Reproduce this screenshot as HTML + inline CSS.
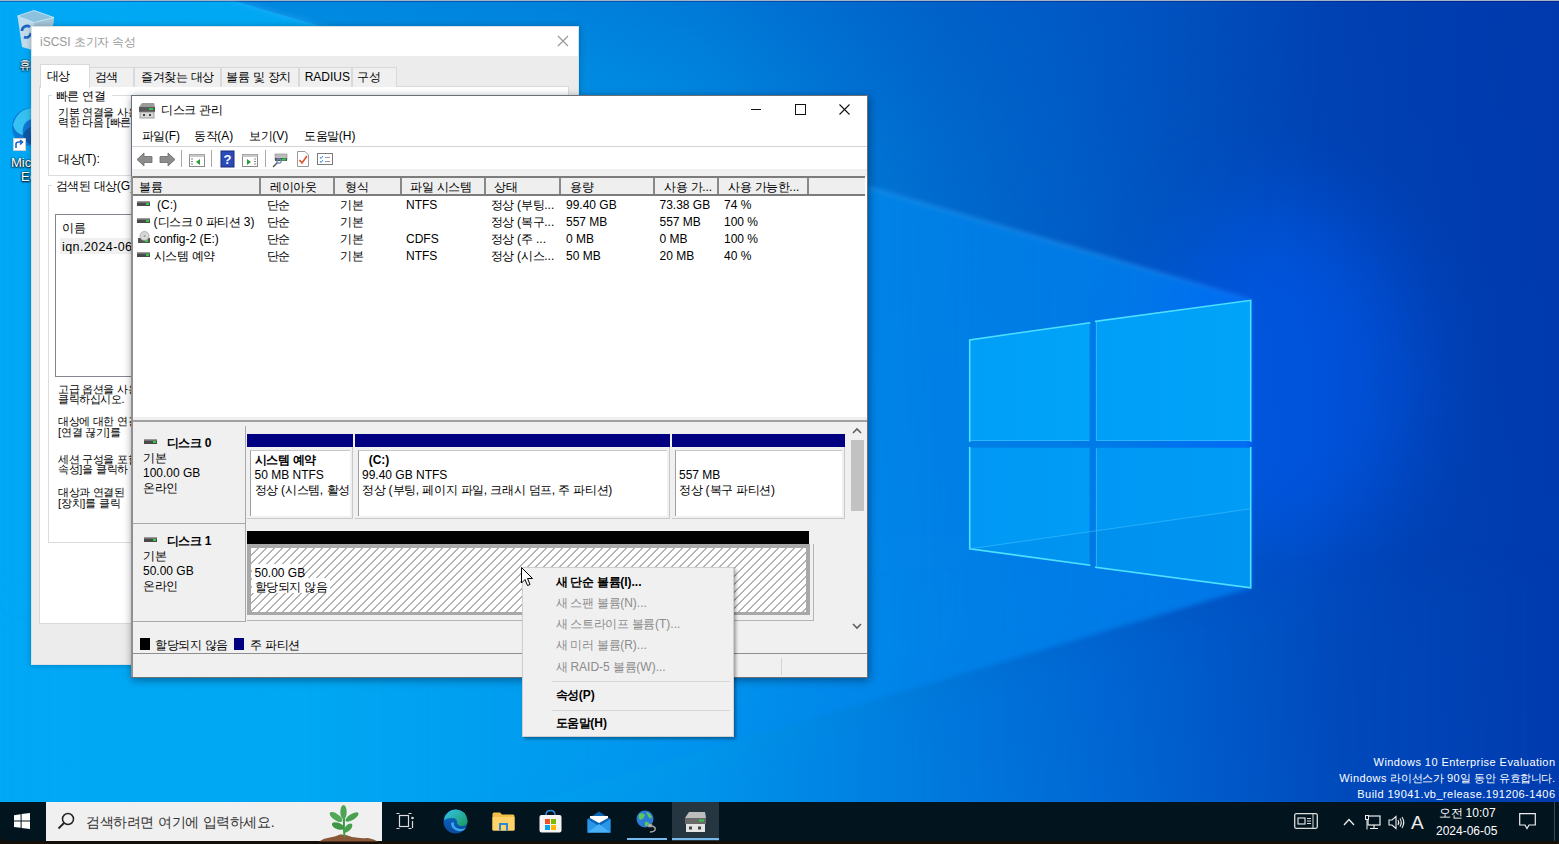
<!DOCTYPE html><html><head><meta charset="utf-8"><style>
html,body{margin:0;padding:0;width:1559px;height:844px;overflow:hidden;font-family:"Liberation Sans",sans-serif;}
.t{position:absolute;white-space:pre;}
svg{overflow:visible}
body.kr .h{font-size:1em!important;letter-spacing:-0.4px!important;-webkit-text-stroke:0!important;}
</style></head><body>
<div style="position:absolute;left:0px;top:0px;width:1559px;height:844px;background:linear-gradient(90deg,#00a8f6 0%,#00aaf2 20%,#009aea 45%,#007ad8 60%,#0068d0 70%,#0048b8 86%,#003cb0 100%)"></div><svg style="position:absolute;left:0px;top:0px" width="1559" height="844" viewBox="0 0 1559 844">
<defs>
<radialGradient id="topd" cx="1559" cy="0" r="1000" gradientUnits="userSpaceOnUse">
<stop offset="0" stop-color="#0036aa" stop-opacity="0.5"/>
<stop offset="0.6" stop-color="#0036aa" stop-opacity="0.2"/>
<stop offset="1" stop-color="#0036aa" stop-opacity="0"/>
</radialGradient>
</defs>
<rect x="0" y="0" width="1559" height="800" fill="url(#topd)"/>
<linearGradient id="abv" x1="0" y1="0" x2="0" y2="300" gradientUnits="userSpaceOnUse"><stop offset="0" stop-color="#0050c0" stop-opacity="0.38"/><stop offset="0.5" stop-color="#0050c0" stop-opacity="0.12"/><stop offset="1" stop-color="#0050c0" stop-opacity="0.05"/></linearGradient>
<linearGradient id="abvm" x1="0" y1="0" x2="1559" y2="0" gradientUnits="userSpaceOnUse"><stop offset="0" stop-color="#fff"/><stop offset="0.62" stop-color="#fff"/><stop offset="0.85" stop-color="#000"/></linearGradient>
<mask id="abvmask" maskUnits="userSpaceOnUse" x="0" y="-100" width="1559" height="500"><rect x="0" y="-100" width="1559" height="500" fill="url(#abvm)"/></mask>
<polygon points="0,-68 1251,300 1559,300 1559,0 0,0" fill="url(#abv)" mask="url(#abvmask)"/>
</svg><div style="position:absolute;left:0;top:0;width:1559px;height:844px;filter:blur(2.5px)"><svg width="1559" height="844" style="position:absolute;left:0;top:0"><defs><linearGradient id="bm2" x1="0" y1="0" x2="1251" y2="0" gradientUnits="userSpaceOnUse"><stop offset="0" stop-color="#00a8f6" stop-opacity="0"/><stop offset="0.6" stop-color="#008cf2" stop-opacity="0.5"/><stop offset="1" stop-color="#0088f6" stop-opacity="0.75"/></linearGradient></defs><polygon points="1251,300 1251,588 0,960 0,-68" fill="url(#bm2)"/><line x1="1251" y1="300" x2="0" y2="-68" stroke="#50b4ff" stroke-width="2" opacity="0.5"/></svg></div><div style="position:absolute;left:0;top:0;width:1559px;height:844px;filter:blur(16px)"><svg width="1559" height="844" style="position:absolute;left:0;top:0"><defs><linearGradient id="bm3" x1="0" y1="0" x2="1559" y2="0" gradientUnits="userSpaceOnUse"><stop offset="0" stop-color="#00a8f6" stop-opacity="0"/><stop offset="0.5" stop-color="#0080ee" stop-opacity="0.3"/><stop offset="0.8" stop-color="#0070ee" stop-opacity="0.15"/><stop offset="1" stop-color="#0060e0" stop-opacity="0"/></linearGradient></defs><polygon points="1251,592 1600,560 1600,900 0,900 0,964" fill="url(#bm3)"/><line x1="969" y1="549" x2="0" y2="600" stroke="#40c0ff" stroke-width="2" opacity="0.3"/></svg></div><div style="position:absolute;left:1160px;top:200px;width:250px;height:360px;border-radius:50%;background:#0060ff;opacity:0.5;filter:blur(45px)"></div><svg style="position:absolute;left:0px;top:0px" width="1559" height="844" viewBox="0 0 1559 844"><defs><linearGradient id="pane" x1="0" y1="0" x2="1" y2="0">
<stop offset="0" stop-color="#009ef8"/><stop offset="1" stop-color="#00a4f8"/></linearGradient>
<linearGradient id="paneb" x1="0" y1="0" x2="1" y2="0"><stop offset="0" stop-color="#0098f4"/><stop offset="1" stop-color="#009cf6"/></linearGradient></defs>
<g stroke="none">
<polygon points="969.7,339.9 1089.6,322.8 1089.6,441 969.7,441" fill="url(#pane)"/>
<polygon points="1095.7,321.4 1250.7,300.3 1250.7,441 1095.7,441" fill="url(#pane)"/>
<polygon points="969.7,447.8 1089.6,447.8 1089.6,565.2 969.7,548.8" fill="url(#paneb)"/>
<polygon points="1095.7,447.8 1250.7,447.8 1250.7,587.8 1095.7,567.3" fill="url(#paneb)"/>
</g>
<polygon points="969.7,548.8 1250.7,508.8 1250.7,587.8 1095.7,567.3 1089.6,565.2" fill="#0060d0" opacity="0.12"/>
<g stroke="#4ee0ff" stroke-width="1.6" fill="none" stroke-linecap="square">
<path d="M969.7,441 L969.7,339.9 L1089.6,322.8"/>
<path d="M1095.7,321.4 L1250.7,300.3 L1250.7,441"/>
<path d="M969.7,447.8 L969.7,548.8 L1089.6,565.2"/>
<path d="M1095.7,567.3 L1250.7,587.8 L1250.7,447.8"/>
</g>
<g stroke="#60d0ff" stroke-width="1" fill="none" opacity="0.45">
<path d="M1096.5,322 L1096.5,440 M1096.5,448.5 L1096.5,566.5 M970.5,440.5 L1089,440.5 M1096,440.5 L1250,440.5"/>
</g>
<line x1="969.7" y1="548.8" x2="1250.7" y2="508.8" stroke="#40c0ff" stroke-width="1" opacity="0.6"/></svg><div style="position:absolute;left:0px;top:0px;width:1559px;height:1px;background:#a2b2c8"></div><div style="position:absolute;left:0px;top:1px;width:1559px;height:1px;background:rgba(0,10,90,0.35)"></div><div style="position:absolute;left:0px;top:802px;width:1559px;height:42px;background:#140f08"></div><div style="position:absolute;left:0px;top:802px;width:1559px;height:39px;background:#02141e;border-bottom-left-radius:6px"></div><svg style="position:absolute;left:0px;top:0px" width="60" height="60" viewBox="0 0 60 60">
<polygon points="17.5,16 34,22.5 54,17.5 50,47 34,50.5 22,47" fill="#c0dcea"/>
<polygon points="34,22.5 54,17.5 50,47 34,50.5" fill="#a4c6d8"/>
<polygon points="17.5,16 34,10.5 54,17.5 34,22.5" fill="#8cc2de" stroke="#d4eeff" stroke-width="0.8"/>
<path d="M22,31 A5,5 0 0 1 30,27 M31,33 A5,5 0 0 1 24,37" fill="none" stroke="#1e64c8" stroke-width="2.6"/>
</svg><div class="t" style="left:19px;top:57px;font-size:12px;line-height:16px;color:#fff;font-weight:400;text-shadow:0 0 2px #000,0 1px 2px #000"><span class="h" style="font-size:15.6px;letter-spacing:-0.2px">휴지통</span></div><svg style="position:absolute;left:11px;top:107px" width="42" height="42" viewBox="0 0 42 42">
<circle cx="20" cy="20" r="19" fill="#0f78d4"/>
<path d="M2,18 Q6,2 22,1 Q36,2 39,16 Q30,8 20,12 Q10,16 12,28 Q4,26 2,18Z" fill="#35c1f1"/>
<path d="M12,28 Q14,38 26,38 Q34,37 38,30 Q28,36 22,30 Q18,26 20,20 Q14,22 12,28Z" fill="#0c59a4"/>
</svg><div style="position:absolute;left:13px;top:138px;width:13px;height:13px;background:#fff;border:1px solid #ccc;box-sizing:border-box"></div><svg style="position:absolute;left:13px;top:138px" width="13" height="13" viewBox="0 0 13 13"><path d="M3,10 L3,6 Q3,4 6,4 L9,4 M7,2 L9.5,4 L7,6.5" fill="none" stroke="#1a64c8" stroke-width="1.6"/></svg><div class="t" style="left:11px;top:155px;font-size:13px;line-height:16px;color:#fff;font-weight:400;text-shadow:0 0 2px #000,0 1px 2px #000">Mic</div><div class="t" style="left:21px;top:169px;font-size:13px;line-height:16px;color:#fff;font-weight:400;text-shadow:0 0 2px #000,0 1px 2px #000">Ec</div><div style="position:absolute;left:31px;top:26px;width:548px;height:639px;background:#ececec;border:1px solid #d8e0e8;box-sizing:border-box;box-shadow:0 0 6px rgba(0,0,0,0.25)"></div><div style="position:absolute;left:32px;top:27px;width:546px;height:29px;background:#fff"></div><div class="t" style="left:40px;top:34px;font-size:12px;line-height:16px;color:#999;font-weight:400;">iSCSI <span class="h" style="font-size:15.6px;letter-spacing:-0.2px">초기자</span> <span class="h" style="font-size:15.6px;letter-spacing:-0.2px">속성</span></div><svg style="position:absolute;left:557px;top:35px" width="12" height="12" viewBox="0 0 12 12"><path d="M1,1 L11,11 M11,1 L1,11" stroke="#999" stroke-width="1.2"/></svg><div style="position:absolute;left:39px;top:86px;width:530px;height:537.5px;background:#fff;border:1px solid #d9d9d9;box-sizing:border-box"></div><div style="position:absolute;left:89px;top:67px;width:45px;height:20px;background:#f0f0f0;border:1px solid #d9d9d9;border-bottom:none;box-sizing:border-box"></div><div class="t" style="left:94.5px;top:69px;font-size:12px;line-height:16px;color:#000;font-weight:400;"><span class="h" style="font-size:15.6px;letter-spacing:-0.2px">검색</span></div><div style="position:absolute;left:133.5px;top:67px;width:87.5px;height:20px;background:#f0f0f0;border:1px solid #d9d9d9;border-bottom:none;box-sizing:border-box"></div><div class="t" style="left:141px;top:69px;font-size:12px;line-height:16px;color:#000;font-weight:400;"><span class="h" style="font-size:15.6px;letter-spacing:-0.2px">즐겨찾는</span> <span class="h" style="font-size:15.6px;letter-spacing:-0.2px">대상</span></div><div style="position:absolute;left:220.5px;top:67px;width:78.5px;height:20px;background:#f0f0f0;border:1px solid #d9d9d9;border-bottom:none;box-sizing:border-box"></div><div class="t" style="left:226px;top:69px;font-size:12px;line-height:16px;color:#000;font-weight:400;"><span class="h" style="font-size:15.6px;letter-spacing:-0.2px">볼륨</span> <span class="h" style="font-size:15.6px;letter-spacing:-0.2px">및</span> <span class="h" style="font-size:15.6px;letter-spacing:-0.2px">장치</span></div><div style="position:absolute;left:298.5px;top:67px;width:53.5px;height:20px;background:#f0f0f0;border:1px solid #d9d9d9;border-bottom:none;box-sizing:border-box"></div><div class="t" style="left:304.7px;top:69px;font-size:12px;line-height:16px;color:#000;font-weight:400;">RADIUS</div><div style="position:absolute;left:351.5px;top:67px;width:45px;height:20px;background:#f0f0f0;border:1px solid #d9d9d9;border-bottom:none;box-sizing:border-box"></div><div class="t" style="left:357.4px;top:69px;font-size:12px;line-height:16px;color:#000;font-weight:400;"><span class="h" style="font-size:15.6px;letter-spacing:-0.2px">구성</span></div><div style="position:absolute;left:39.5px;top:64px;width:50.5px;height:24px;background:#fff;border:1px solid #d9d9d9;border-bottom:none;box-sizing:border-box"></div><div class="t" style="left:46.5px;top:67.5px;font-size:12px;line-height:16px;color:#000;font-weight:400;"><span class="h" style="font-size:15.6px;letter-spacing:-0.2px">대상</span></div><div style="position:absolute;left:47.5px;top:95px;width:552.5px;height:80.5px;border:1px solid #dcdcdc;box-sizing:border-box"></div><div style="position:absolute;left:52px;top:88px;width:60px;height:14px;background:#fff"></div><div class="t" style="left:55.5px;top:88px;font-size:12px;line-height:16px;color:#000;font-weight:400;"><span class="h" style="font-size:15.6px;letter-spacing:-0.2px">빠른</span> <span class="h" style="font-size:15.6px;letter-spacing:-0.2px">연결</span></div><div class="t" style="left:58px;top:106.5px;font-size:11px;line-height:11px;color:#000;font-weight:400;"><span class="h" style="font-size:14.3px;letter-spacing:0.8px">기본</span> <span class="h" style="font-size:14.3px;letter-spacing:0.8px">연결을</span> <span class="h" style="font-size:14.3px;letter-spacing:0.8px">사용하여</span></div><div class="t" style="left:58px;top:117px;font-size:11px;line-height:11px;color:#000;font-weight:400;"><span class="h" style="font-size:14.3px;letter-spacing:0.8px">력한</span> <span class="h" style="font-size:14.3px;letter-spacing:0.8px">다음</span> [<span class="h" style="font-size:14.3px;letter-spacing:0.8px">빠른</span> <span class="h" style="font-size:14.3px;letter-spacing:0.8px">연결</span>]</div><div class="t" style="left:58px;top:150.5px;font-size:12px;line-height:16px;color:#000;font-weight:400;"><span class="h" style="font-size:15.6px;letter-spacing:-0.2px">대상</span>(T):</div><div style="position:absolute;left:47.5px;top:184.5px;width:552.5px;height:358px;border:1px solid #dcdcdc;box-sizing:border-box"></div><div style="position:absolute;left:52px;top:177px;width:83px;height:15px;background:#fff"></div><div class="t" style="left:55.5px;top:177.5px;font-size:12px;line-height:16px;color:#000;font-weight:400;"><span class="h" style="font-size:15.6px;letter-spacing:-0.2px">검색된</span> <span class="h" style="font-size:15.6px;letter-spacing:-0.2px">대상</span>(G)</div><div style="position:absolute;left:55px;top:214px;width:545px;height:163px;background:#fff;border:1px solid #828790;box-sizing:border-box"></div><div class="t" style="left:62px;top:220px;font-size:12px;line-height:16px;color:#000;font-weight:400;"><span class="h" style="font-size:15.6px;letter-spacing:-0.2px">이름</span></div><div style="position:absolute;left:60px;top:238px;width:140px;height:16px;background:#f0f0f0"></div><div class="t" style="left:62px;top:238.5px;font-size:12.5px;line-height:16px;color:#000;font-weight:400;letter-spacing:0.4px">iqn.2024-06.a</div><div class="t" style="left:58px;top:384px;font-size:11px;line-height:11px;color:#000;font-weight:400;"><span class="h" style="font-size:14.3px;letter-spacing:0.8px">고급</span> <span class="h" style="font-size:14.3px;letter-spacing:0.8px">옵션을</span> <span class="h" style="font-size:14.3px;letter-spacing:0.8px">사용하여</span></div><div class="t" style="left:58px;top:393.5px;font-size:11px;line-height:11px;color:#000;font-weight:400;"><span class="h" style="font-size:14.3px;letter-spacing:0.8px">클릭하십시오</span>.</div><div class="t" style="left:58px;top:416px;font-size:11px;line-height:11px;color:#000;font-weight:400;"><span class="h" style="font-size:14.3px;letter-spacing:0.8px">대상에</span> <span class="h" style="font-size:14.3px;letter-spacing:0.8px">대한</span> <span class="h" style="font-size:14.3px;letter-spacing:0.8px">연결</span></div><div class="t" style="left:58px;top:427px;font-size:11px;line-height:11px;color:#000;font-weight:400;">[<span class="h" style="font-size:14.3px;letter-spacing:0.8px">연결</span> <span class="h" style="font-size:14.3px;letter-spacing:0.8px">끊기</span>]<span class="h" style="font-size:14.3px;letter-spacing:0.8px">를</span></div><div class="t" style="left:58px;top:453.5px;font-size:11px;line-height:11px;color:#000;font-weight:400;"><span class="h" style="font-size:14.3px;letter-spacing:0.8px">세션</span> <span class="h" style="font-size:14.3px;letter-spacing:0.8px">구성을</span> <span class="h" style="font-size:14.3px;letter-spacing:0.8px">포함</span></div><div class="t" style="left:58px;top:463.5px;font-size:11px;line-height:11px;color:#000;font-weight:400;"><span class="h" style="font-size:14.3px;letter-spacing:0.8px">속성</span>]<span class="h" style="font-size:14.3px;letter-spacing:0.8px">을</span> <span class="h" style="font-size:14.3px;letter-spacing:0.8px">클릭하</span></div><div class="t" style="left:58px;top:486.5px;font-size:11px;line-height:11px;color:#000;font-weight:400;"><span class="h" style="font-size:14.3px;letter-spacing:0.8px">대상과</span> <span class="h" style="font-size:14.3px;letter-spacing:0.8px">연결된</span></div><div class="t" style="left:58px;top:497.5px;font-size:11px;line-height:11px;color:#000;font-weight:400;">[<span class="h" style="font-size:14.3px;letter-spacing:0.8px">장치</span>]<span class="h" style="font-size:14.3px;letter-spacing:0.8px">를</span> <span class="h" style="font-size:14.3px;letter-spacing:0.8px">클릭</span></div><div style="position:absolute;left:131px;top:95px;width:737px;height:583px;background:#f0f0f0;border:1px solid #6a7078;box-sizing:border-box;box-shadow:1px 2px 8px rgba(0,10,30,0.45)"></div><div style="position:absolute;left:132px;top:96px;width:735px;height:73px;background:#fff"></div><svg style="position:absolute;left:138px;top:102px" width="18" height="16" viewBox="0 0 18 16">
<path d="M1,5 L4,1 L16,1 L17,5 Z" fill="#9a9a9a"/>
<rect x="1" y="5" width="16" height="5" fill="#5a5a5a"/>
<rect x="11" y="6" width="4" height="2" fill="#2ec84a"/>
<rect x="2" y="10" width="14" height="6" fill="#d8d8d8" stroke="#8a8a8a" stroke-width="0.8"/>
<rect x="5" y="12" width="2" height="2" fill="#444"/><rect x="11" y="12" width="2" height="2" fill="#444"/>
</svg><div class="t" style="left:161px;top:102px;font-size:12px;line-height:16px;color:#000;font-weight:400;"><span class="h" style="font-size:15.6px;letter-spacing:-0.2px">디스크</span> <span class="h" style="font-size:15.6px;letter-spacing:-0.2px">관리</span></div><svg style="position:absolute;left:751px;top:109px" width="10" height="2" viewBox="0 0 10 2"><rect x="0" y="0" width="10" height="1" fill="#111"/></svg><svg style="position:absolute;left:794.5px;top:104px" width="11" height="11" viewBox="0 0 11 11"><rect x="0.5" y="0.5" width="10" height="10" fill="none" stroke="#111" stroke-width="1"/></svg><svg style="position:absolute;left:839px;top:104px" width="11" height="11" viewBox="0 0 11 11"><path d="M0.5,0.5 L10.5,10.5 M10.5,0.5 L0.5,10.5" stroke="#111" stroke-width="1.1"/></svg><div class="t" style="left:141.5px;top:128px;font-size:12px;line-height:16px;color:#000;font-weight:400;"><span class="h" style="font-size:15.6px;letter-spacing:-0.2px">파일</span>(F)</div><div class="t" style="left:194px;top:128px;font-size:12px;line-height:16px;color:#000;font-weight:400;"><span class="h" style="font-size:15.6px;letter-spacing:-0.2px">동작</span>(A)</div><div class="t" style="left:249px;top:128px;font-size:12px;line-height:16px;color:#000;font-weight:400;"><span class="h" style="font-size:15.6px;letter-spacing:-0.2px">보기</span>(V)</div><div class="t" style="left:304px;top:128px;font-size:12px;line-height:16px;color:#000;font-weight:400;"><span class="h" style="font-size:15.6px;letter-spacing:-0.2px">도움말</span>(H)</div><div style="position:absolute;left:132px;top:146px;width:735px;height:1px;background:#d4d4d4"></div><svg style="position:absolute;left:136px;top:152px" width="17" height="15" viewBox="0 0 17 15"><path d="M1,7.5 L8,1 L8,4.5 L16,4.5 L16,10.5 L8,10.5 L8,14 Z" fill="#8c8c8c" stroke="#6a6a6a" stroke-width="0.8"/></svg><svg style="position:absolute;left:159px;top:152px" width="17" height="15" viewBox="0 0 17 15"><path d="M16,7.5 L9,1 L9,4.5 L1,4.5 L1,10.5 L9,10.5 L9,14 Z" fill="#8c8c8c" stroke="#6a6a6a" stroke-width="0.8"/></svg><div style="position:absolute;left:181px;top:150px;width:1px;height:17px;background:#a8a8a8"></div><svg style="position:absolute;left:189px;top:154px" width="16" height="13" viewBox="0 0 16 13"><rect x="0.5" y="0.5" width="15" height="12" fill="#fff" stroke="#8a8a8a"/><rect x="0.5" y="0.5" width="15" height="2.5" fill="#c8c8c8"/><path d="M11,5 L7,8 L11,11Z" fill="#2a9a3a"/><path d="M2,5h2M2,7.5h2M2,10h2" stroke="#888"/></svg><div style="position:absolute;left:211px;top:150px;width:1px;height:17px;background:#a8a8a8"></div><svg style="position:absolute;left:221px;top:151px" width="13" height="16" viewBox="0 0 13 16"><rect x="0" y="0" width="13" height="16" fill="#2a4cb8"/><rect x="0" y="0" width="13" height="16" fill="none" stroke="#1a2a78" stroke-width="1"/><text x="6.5" y="13" font-size="13" font-family="Liberation Sans" font-weight="bold" fill="#fff" text-anchor="middle">?</text></svg><svg style="position:absolute;left:242px;top:154px" width="16" height="13" viewBox="0 0 16 13"><rect x="0.5" y="0.5" width="15" height="12" fill="#fff" stroke="#8a8a8a"/><rect x="0.5" y="0.5" width="15" height="2.5" fill="#c8c8c8"/><path d="M5,5 L9,8 L5,11Z" fill="#2a9a3a"/><path d="M12,5h2M12,7.5h2M12,10h2" stroke="#888"/></svg><div style="position:absolute;left:264.5px;top:150px;width:1px;height:17px;background:#a8a8a8"></div><svg style="position:absolute;left:272px;top:153px" width="16" height="15" viewBox="0 0 16 15"><rect x="3" y="1" width="12" height="6" fill="#bcbcbc" stroke="#888" stroke-width="0.6"/><rect x="3" y="5" width="12" height="3" fill="#555"/><rect x="10" y="5.5" width="4" height="2" fill="#2ec84a"/><path d="M1,14 L6,9" stroke="#555" stroke-width="1.5"/><circle cx="7" cy="8" r="2.2" fill="none" stroke="#6a8ab8" stroke-width="1.2"/></svg><svg style="position:absolute;left:297px;top:151px" width="12" height="16" viewBox="0 0 12 16"><path d="M0.5,0.5 L8,0.5 L11.5,4 L11.5,15.5 L0.5,15.5 Z" fill="#fff" stroke="#9a9a9a"/><path d="M2.5,9 L5,12 L10,5" fill="none" stroke="#e0502a" stroke-width="1.6"/></svg><svg style="position:absolute;left:317px;top:153px" width="16" height="12" viewBox="0 0 16 12"><rect x="0.5" y="0.5" width="15" height="11" fill="#fff" stroke="#7a7a7a"/><path d="M3,4 L4,5.5 L6,3 M3,8 L4,9.5 L6,7" stroke="#3a8ad8" fill="none"/><path d="M8,4.5h5M8,8.5h5" stroke="#999"/></svg><div style="position:absolute;left:132px;top:169px;width:735px;height:8px;background:#f0f0f0"></div><div style="position:absolute;left:132px;top:176.5px;width:735px;height:240.5px;background:#fff"></div><div style="position:absolute;left:132px;top:176px;width:733px;height:20px;background:#efefef;border-top:2px solid #7c7c7c;border-bottom:2px solid #7c7c7c;box-sizing:border-box"></div><div style="position:absolute;left:259px;top:178px;width:2px;height:16px;background:#888"></div><div style="position:absolute;left:333px;top:178px;width:2px;height:16px;background:#888"></div><div style="position:absolute;left:399.5px;top:178px;width:2px;height:16px;background:#888"></div><div style="position:absolute;left:483.5px;top:178px;width:2px;height:16px;background:#888"></div><div style="position:absolute;left:558.5px;top:178px;width:2px;height:16px;background:#888"></div><div style="position:absolute;left:652.5px;top:178px;width:2px;height:16px;background:#888"></div><div style="position:absolute;left:716.5px;top:178px;width:2px;height:16px;background:#888"></div><div style="position:absolute;left:806.5px;top:178px;width:2px;height:16px;background:#888"></div><div class="t" style="left:139px;top:179px;font-size:12px;line-height:16px;color:#000;font-weight:400;"><span class="h" style="font-size:15.6px;letter-spacing:-0.2px">볼륨</span></div><div class="t" style="left:270px;top:179px;font-size:12px;line-height:16px;color:#000;font-weight:400;"><span class="h" style="font-size:15.6px;letter-spacing:-0.2px">레이아웃</span></div><div class="t" style="left:345px;top:179px;font-size:12px;line-height:16px;color:#000;font-weight:400;"><span class="h" style="font-size:15.6px;letter-spacing:-0.2px">형식</span></div><div class="t" style="left:410px;top:179px;font-size:12px;line-height:16px;color:#000;font-weight:400;"><span class="h" style="font-size:15.6px;letter-spacing:-0.2px">파일</span> <span class="h" style="font-size:15.6px;letter-spacing:-0.2px">시스템</span></div><div class="t" style="left:494px;top:179px;font-size:12px;line-height:16px;color:#000;font-weight:400;"><span class="h" style="font-size:15.6px;letter-spacing:-0.2px">상태</span></div><div class="t" style="left:570px;top:179px;font-size:12px;line-height:16px;color:#000;font-weight:400;"><span class="h" style="font-size:15.6px;letter-spacing:-0.2px">용량</span></div><div class="t" style="left:664px;top:179px;font-size:12px;line-height:16px;color:#000;font-weight:400;"><span class="h" style="font-size:15.6px;letter-spacing:-0.2px">사용</span> <span class="h" style="font-size:15.6px;letter-spacing:-0.2px">가</span>...</div><div class="t" style="left:728px;top:179px;font-size:12px;line-height:16px;color:#000;font-weight:400;"><span class="h" style="font-size:15.6px;letter-spacing:-0.2px">사용</span> <span class="h" style="font-size:15.6px;letter-spacing:-0.2px">가능한</span>...</div><svg style="position:absolute;left:137px;top:201.3px" width="14" height="6" viewBox="0 0 14 6"><rect x="0" y="0" width="13" height="5" fill="#4a4a4a"/><rect x="0" y="0" width="13" height="1.5" fill="#9a9a9a"/><rect x="9" y="2" width="3" height="2" fill="#2ec84a"/></svg><div class="t" style="left:157px;top:197.3px;font-size:12px;line-height:16px;color:#000;font-weight:400;">(C:)</div><div class="t" style="left:266.5px;top:197.3px;font-size:12px;line-height:16px;color:#000;font-weight:400;"><span class="h" style="font-size:15.6px;letter-spacing:-0.2px">단순</span></div><div class="t" style="left:340px;top:197.3px;font-size:12px;line-height:16px;color:#000;font-weight:400;"><span class="h" style="font-size:15.6px;letter-spacing:-0.2px">기본</span></div><div class="t" style="left:406px;top:197.3px;font-size:12px;line-height:16px;color:#000;font-weight:400;">NTFS</div><div class="t" style="left:490.5px;top:197.3px;font-size:12px;line-height:16px;color:#000;font-weight:400;"><span class="h" style="font-size:15.6px;letter-spacing:-0.2px">정상</span> (<span class="h" style="font-size:15.6px;letter-spacing:-0.2px">부팅</span>...</div><div class="t" style="left:566px;top:197.3px;font-size:12px;line-height:16px;color:#000;font-weight:400;">99.40 GB</div><div class="t" style="left:659.5px;top:197.3px;font-size:12px;line-height:16px;color:#000;font-weight:400;">73.38 GB</div><div class="t" style="left:724px;top:197.3px;font-size:12px;line-height:16px;color:#000;font-weight:400;">74 %</div><svg style="position:absolute;left:137px;top:218.1px" width="14" height="6" viewBox="0 0 14 6"><rect x="0" y="0" width="13" height="5" fill="#4a4a4a"/><rect x="0" y="0" width="13" height="1.5" fill="#9a9a9a"/><rect x="9" y="2" width="3" height="2" fill="#2ec84a"/></svg><div class="t" style="left:153.5px;top:214.1px;font-size:12px;line-height:16px;color:#000;font-weight:400;">(<span class="h" style="font-size:15.6px;letter-spacing:-0.2px">디스크</span> 0 <span class="h" style="font-size:15.6px;letter-spacing:-0.2px">파티션</span> 3)</div><div class="t" style="left:266.5px;top:214.1px;font-size:12px;line-height:16px;color:#000;font-weight:400;"><span class="h" style="font-size:15.6px;letter-spacing:-0.2px">단순</span></div><div class="t" style="left:340px;top:214.1px;font-size:12px;line-height:16px;color:#000;font-weight:400;"><span class="h" style="font-size:15.6px;letter-spacing:-0.2px">기본</span></div><div class="t" style="left:406px;top:214.1px;font-size:12px;line-height:16px;color:#000;font-weight:400;"></div><div class="t" style="left:490.5px;top:214.1px;font-size:12px;line-height:16px;color:#000;font-weight:400;"><span class="h" style="font-size:15.6px;letter-spacing:-0.2px">정상</span> (<span class="h" style="font-size:15.6px;letter-spacing:-0.2px">복구</span>...</div><div class="t" style="left:566px;top:214.1px;font-size:12px;line-height:16px;color:#000;font-weight:400;">557 MB</div><div class="t" style="left:659.5px;top:214.1px;font-size:12px;line-height:16px;color:#000;font-weight:400;">557 MB</div><div class="t" style="left:724px;top:214.1px;font-size:12px;line-height:16px;color:#000;font-weight:400;">100 %</div><svg style="position:absolute;left:137px;top:230.9px" width="14" height="14" viewBox="0 0 14 14"><rect x="1" y="7" width="12" height="5" fill="#555"/><rect x="8" y="9" width="3" height="2" fill="#2ec84a"/><circle cx="7.5" cy="5" r="4.5" fill="#d8d8d8" stroke="#999" stroke-width="0.7"/><circle cx="7.5" cy="5" r="1" fill="#999"/></svg><div class="t" style="left:153.5px;top:230.9px;font-size:12px;line-height:16px;color:#000;font-weight:400;">config-2 (E:)</div><div class="t" style="left:266.5px;top:230.9px;font-size:12px;line-height:16px;color:#000;font-weight:400;"><span class="h" style="font-size:15.6px;letter-spacing:-0.2px">단순</span></div><div class="t" style="left:340px;top:230.9px;font-size:12px;line-height:16px;color:#000;font-weight:400;"><span class="h" style="font-size:15.6px;letter-spacing:-0.2px">기본</span></div><div class="t" style="left:406px;top:230.9px;font-size:12px;line-height:16px;color:#000;font-weight:400;">CDFS</div><div class="t" style="left:490.5px;top:230.9px;font-size:12px;line-height:16px;color:#000;font-weight:400;"><span class="h" style="font-size:15.6px;letter-spacing:-0.2px">정상</span> (<span class="h" style="font-size:15.6px;letter-spacing:-0.2px">주</span> ...</div><div class="t" style="left:566px;top:230.9px;font-size:12px;line-height:16px;color:#000;font-weight:400;">0 MB</div><div class="t" style="left:659.5px;top:230.9px;font-size:12px;line-height:16px;color:#000;font-weight:400;">0 MB</div><div class="t" style="left:724px;top:230.9px;font-size:12px;line-height:16px;color:#000;font-weight:400;">100 %</div><svg style="position:absolute;left:137px;top:251.7px" width="14" height="6" viewBox="0 0 14 6"><rect x="0" y="0" width="13" height="5" fill="#4a4a4a"/><rect x="0" y="0" width="13" height="1.5" fill="#9a9a9a"/><rect x="9" y="2" width="3" height="2" fill="#2ec84a"/></svg><div class="t" style="left:153.5px;top:247.7px;font-size:12px;line-height:16px;color:#000;font-weight:400;"><span class="h" style="font-size:15.6px;letter-spacing:-0.2px">시스템</span> <span class="h" style="font-size:15.6px;letter-spacing:-0.2px">예약</span></div><div class="t" style="left:266.5px;top:247.7px;font-size:12px;line-height:16px;color:#000;font-weight:400;"><span class="h" style="font-size:15.6px;letter-spacing:-0.2px">단순</span></div><div class="t" style="left:340px;top:247.7px;font-size:12px;line-height:16px;color:#000;font-weight:400;"><span class="h" style="font-size:15.6px;letter-spacing:-0.2px">기본</span></div><div class="t" style="left:406px;top:247.7px;font-size:12px;line-height:16px;color:#000;font-weight:400;">NTFS</div><div class="t" style="left:490.5px;top:247.7px;font-size:12px;line-height:16px;color:#000;font-weight:400;"><span class="h" style="font-size:15.6px;letter-spacing:-0.2px">정상</span> (<span class="h" style="font-size:15.6px;letter-spacing:-0.2px">시스</span>...</div><div class="t" style="left:566px;top:247.7px;font-size:12px;line-height:16px;color:#000;font-weight:400;">50 MB</div><div class="t" style="left:659.5px;top:247.7px;font-size:12px;line-height:16px;color:#000;font-weight:400;">20 MB</div><div class="t" style="left:724px;top:247.7px;font-size:12px;line-height:16px;color:#000;font-weight:400;">40 %</div><div style="position:absolute;left:132px;top:417px;width:735px;height:5px;background:#f0f0f0"></div><div style="position:absolute;left:132px;top:419.5px;width:735px;height:2px;background:#a0a0a0"></div><div style="position:absolute;left:132px;top:422px;width:717px;height:212px;background:#f0f0f0"></div><div style="position:absolute;left:849px;top:422px;width:18px;height:212px;background:#f0f0f0"></div><svg style="position:absolute;left:852px;top:428px" width="10" height="6" viewBox="0 0 10 6"><path d="M1,5 L5,1 L9,5" fill="none" stroke="#606060" stroke-width="1.6"/></svg><div style="position:absolute;left:851px;top:440px;width:13px;height:71px;background:#c2c2c2"></div><svg style="position:absolute;left:852px;top:623px" width="10" height="6" viewBox="0 0 10 6"><path d="M1,1 L5,5 L9,1" fill="none" stroke="#606060" stroke-width="1.6"/></svg><div style="position:absolute;left:131.5px;top:426px;width:114px;height:98px;background:#f0f0f0;border-right:1.5px solid #a8a8a8;border-bottom:1.5px solid #a8a8a8;box-sizing:border-box"></div><svg style="position:absolute;left:144px;top:439px" width="14" height="6" viewBox="0 0 14 6"><rect x="0" y="0" width="13" height="5" fill="#4a4a4a"/><rect x="0" y="0" width="13" height="1.5" fill="#9a9a9a"/><rect x="9" y="2" width="3" height="2" fill="#2ec84a"/></svg><div class="t" style="left:166.5px;top:435px;font-size:12px;line-height:16px;color:#000;font-weight:bold;"><span class="h" style="font-size:15.6px;letter-spacing:-0.2px;-webkit-text-stroke:0.5px currentColor">디스크</span> 0</div><div class="t" style="left:143px;top:450px;font-size:12px;line-height:16px;color:#000;font-weight:400;"><span class="h" style="font-size:15.6px;letter-spacing:-0.2px">기본</span></div><div class="t" style="left:143px;top:465px;font-size:12px;line-height:16px;color:#000;font-weight:400;">100.00 GB</div><div class="t" style="left:143px;top:480px;font-size:12px;line-height:16px;color:#000;font-weight:400;"><span class="h" style="font-size:15.6px;letter-spacing:-0.2px">온라인</span></div><div style="position:absolute;left:131.5px;top:524px;width:114px;height:98px;background:#f0f0f0;border-right:1.5px solid #a8a8a8;border-bottom:1.5px solid #a8a8a8;box-sizing:border-box"></div><svg style="position:absolute;left:144px;top:536.5px" width="14" height="6" viewBox="0 0 14 6"><rect x="0" y="0" width="13" height="5" fill="#4a4a4a"/><rect x="0" y="0" width="13" height="1.5" fill="#9a9a9a"/><rect x="9" y="2" width="3" height="2" fill="#2ec84a"/></svg><div class="t" style="left:166.5px;top:532.5px;font-size:12px;line-height:16px;color:#000;font-weight:bold;"><span class="h" style="font-size:15.6px;letter-spacing:-0.2px;-webkit-text-stroke:0.5px currentColor">디스크</span> 1</div><div class="t" style="left:143px;top:547.5px;font-size:12px;line-height:16px;color:#000;font-weight:400;"><span class="h" style="font-size:15.6px;letter-spacing:-0.2px">기본</span></div><div class="t" style="left:143px;top:562.5px;font-size:12px;line-height:16px;color:#000;font-weight:400;">50.00 GB</div><div class="t" style="left:143px;top:577.5px;font-size:12px;line-height:16px;color:#000;font-weight:400;"><span class="h" style="font-size:15.6px;letter-spacing:-0.2px">온라인</span></div><div style="position:absolute;left:247px;top:433.5px;width:105.5px;height:13.5px;background:#000080"></div><div style="position:absolute;left:247px;top:447px;width:105.5px;height:72px;background:#f0f0f0;border-right:1px solid #c8c8c8;border-bottom:1px solid #c8c8c8;box-sizing:border-box"></div><div style="position:absolute;left:250px;top:449.5px;width:99.5px;height:66.5px;background:#fff;border-left:1.5px solid #a0a0a0;border-top:1.5px solid #c8c8c8;box-sizing:border-box"></div><div class="t" style="left:254.5px;top:452px;font-size:12px;line-height:16px;color:#000;font-weight:bold;"><span class="h" style="font-size:15.6px;letter-spacing:-0.2px;-webkit-text-stroke:0.5px currentColor">시스템</span> <span class="h" style="font-size:15.6px;letter-spacing:-0.2px;-webkit-text-stroke:0.5px currentColor">예약</span></div><div class="t" style="left:254.5px;top:467px;font-size:12px;line-height:16px;color:#000;font-weight:400;">50 MB NTFS</div><div class="t" style="left:254.5px;top:482px;font-size:12px;line-height:16px;color:#000;font-weight:400;"><span class="h" style="font-size:15.6px;letter-spacing:-0.2px">정상</span> (<span class="h" style="font-size:15.6px;letter-spacing:-0.2px">시스템</span>, <span class="h" style="font-size:15.6px;letter-spacing:-0.2px">활성</span></div><div style="position:absolute;left:354.5px;top:433.5px;width:315px;height:13.5px;background:#000080"></div><div style="position:absolute;left:354.5px;top:447px;width:315px;height:72px;background:#f0f0f0;border-right:1px solid #c8c8c8;border-bottom:1px solid #c8c8c8;box-sizing:border-box"></div><div style="position:absolute;left:357.5px;top:449.5px;width:309px;height:66.5px;background:#fff;border-left:1.5px solid #a0a0a0;border-top:1.5px solid #c8c8c8;box-sizing:border-box"></div><div class="t" style="left:362px;top:452px;font-size:12px;line-height:16px;color:#000;font-weight:bold;">  (C:)</div><div class="t" style="left:362px;top:467px;font-size:12px;line-height:16px;color:#000;font-weight:400;">99.40 GB NTFS</div><div class="t" style="left:362px;top:482px;font-size:12px;line-height:16px;color:#000;font-weight:400;"><span class="h" style="font-size:15.6px;letter-spacing:-0.2px">정상</span> (<span class="h" style="font-size:15.6px;letter-spacing:-0.2px">부팅</span>, <span class="h" style="font-size:15.6px;letter-spacing:-0.2px">페이지</span> <span class="h" style="font-size:15.6px;letter-spacing:-0.2px">파일</span>, <span class="h" style="font-size:15.6px;letter-spacing:-0.2px">크래시</span> <span class="h" style="font-size:15.6px;letter-spacing:-0.2px">덤프</span>, <span class="h" style="font-size:15.6px;letter-spacing:-0.2px">주</span> <span class="h" style="font-size:15.6px;letter-spacing:-0.2px">파티션</span>)</div><div style="position:absolute;left:671.5px;top:433.5px;width:173.5px;height:13.5px;background:#000080"></div><div style="position:absolute;left:671.5px;top:447px;width:173.5px;height:72px;background:#f0f0f0;border-right:1px solid #c8c8c8;border-bottom:1px solid #c8c8c8;box-sizing:border-box"></div><div style="position:absolute;left:674.5px;top:449.5px;width:167.5px;height:66.5px;background:#fff;border-left:1.5px solid #a0a0a0;border-top:1.5px solid #c8c8c8;box-sizing:border-box"></div><div class="t" style="left:679px;top:452px;font-size:12px;line-height:16px;color:#000;font-weight:400;"></div><div class="t" style="left:679px;top:467px;font-size:12px;line-height:16px;color:#000;font-weight:400;">557 MB</div><div class="t" style="left:679px;top:482px;font-size:12px;line-height:16px;color:#000;font-weight:400;"><span class="h" style="font-size:15.6px;letter-spacing:-0.2px">정상</span> (<span class="h" style="font-size:15.6px;letter-spacing:-0.2px">복구</span> <span class="h" style="font-size:15.6px;letter-spacing:-0.2px">파티션</span>)</div><div style="position:absolute;left:252px;top:455px;width:102px;height:40px;"></div><div style="position:absolute;left:247px;top:531px;width:562px;height:12.5px;background:#000"></div><div style="position:absolute;left:247px;top:543.5px;width:567px;height:77.5px;background:#f0f0f0;border-right:1.5px solid #b4b4b4;border-bottom:1.5px solid #b4b4b4;box-sizing:border-box"></div><div style="position:absolute;left:247px;top:544px;width:562.5px;height:71px;background:#a8a8a8"></div><div style="position:absolute;left:251px;top:548px;width:554.5px;height:63.5px;background:repeating-linear-gradient(135deg,#fff 0px,#fff 4.5px,#b2b2b2 4.5px,#b2b2b2 5.66px)"></div><div style="position:absolute;left:252px;top:564px;width:48px;height:14px;background:#fff"></div><div style="position:absolute;left:252px;top:578px;width:78px;height:15px;background:#fff"></div><div class="t" style="left:254.5px;top:564.5px;font-size:12px;line-height:16px;color:#000;font-weight:400;">50.00 GB</div><div class="t" style="left:254.5px;top:578.5px;font-size:12px;line-height:16px;color:#000;font-weight:400;"><span class="h" style="font-size:15.6px;letter-spacing:-0.2px">할당되지</span> <span class="h" style="font-size:15.6px;letter-spacing:-0.2px">않음</span></div><div style="position:absolute;left:132px;top:634px;width:735px;height:20px;background:#f0f0f0;border-bottom:1.5px solid #8f8f8f;box-sizing:border-box"></div><div style="position:absolute;left:139.5px;top:638px;width:10px;height:12px;background:#000"></div><div class="t" style="left:155px;top:636.5px;font-size:12px;line-height:16px;color:#000;font-weight:400;"><span class="h" style="font-size:15.6px;letter-spacing:-0.2px">할당되지</span> <span class="h" style="font-size:15.6px;letter-spacing:-0.2px">않음</span></div><div style="position:absolute;left:234px;top:638px;width:10px;height:12px;background:#000080"></div><div class="t" style="left:250px;top:636.5px;font-size:12px;line-height:16px;color:#000;font-weight:400;"><span class="h" style="font-size:15.6px;letter-spacing:-0.2px">주</span> <span class="h" style="font-size:15.6px;letter-spacing:-0.2px">파티션</span></div><div style="position:absolute;left:132px;top:656px;width:735px;height:21px;background:#f0f0f0"></div><div style="position:absolute;left:781px;top:658px;width:1px;height:17px;background:#d4d4d4"></div><div style="position:absolute;left:131px;top:176px;width:2px;height:501px;background:#8f8f8f"></div><div style="position:absolute;left:521.5px;top:566.5px;width:212px;height:170.5px;background:#f0f0f0;border:1px solid #cfcfcf;box-sizing:border-box;box-shadow:2px 2px 3px rgba(0,0,0,0.35)"></div><div class="t" style="left:555.5px;top:573.5px;font-size:12px;line-height:16px;color:#000;font-weight:bold;"><span class="h" style="font-size:15.6px;letter-spacing:-0.2px;-webkit-text-stroke:0.5px currentColor">새</span> <span class="h" style="font-size:15.6px;letter-spacing:-0.2px;-webkit-text-stroke:0.5px currentColor">단순</span> <span class="h" style="font-size:15.6px;letter-spacing:-0.2px;-webkit-text-stroke:0.5px currentColor">볼륨</span>(I)...</div><div class="t" style="left:555.5px;top:594.5px;font-size:12px;line-height:16px;color:#8c8c8c;font-weight:400;"><span class="h" style="font-size:15.6px;letter-spacing:-0.2px">새</span> <span class="h" style="font-size:15.6px;letter-spacing:-0.2px">스팬</span> <span class="h" style="font-size:15.6px;letter-spacing:-0.2px">볼륨</span>(N)...</div><div class="t" style="left:555.5px;top:616px;font-size:12px;line-height:16px;color:#8c8c8c;font-weight:400;"><span class="h" style="font-size:15.6px;letter-spacing:-0.2px">새</span> <span class="h" style="font-size:15.6px;letter-spacing:-0.2px">스트라이프</span> <span class="h" style="font-size:15.6px;letter-spacing:-0.2px">볼륨</span>(T)...</div><div class="t" style="left:555.5px;top:637px;font-size:12px;line-height:16px;color:#8c8c8c;font-weight:400;"><span class="h" style="font-size:15.6px;letter-spacing:-0.2px">새</span> <span class="h" style="font-size:15.6px;letter-spacing:-0.2px">미러</span> <span class="h" style="font-size:15.6px;letter-spacing:-0.2px">볼륨</span>(R)...</div><div class="t" style="left:555.5px;top:658.5px;font-size:12px;line-height:16px;color:#8c8c8c;font-weight:400;"><span class="h" style="font-size:15.6px;letter-spacing:-0.2px">새</span> RAID-5 <span class="h" style="font-size:15.6px;letter-spacing:-0.2px">볼륨</span>(W)...</div><div class="t" style="left:555.5px;top:686.5px;font-size:12px;line-height:16px;color:#000;font-weight:bold;"><span class="h" style="font-size:15.6px;letter-spacing:-0.2px;-webkit-text-stroke:0.5px currentColor">속성</span>(P)</div><div class="t" style="left:555.5px;top:715px;font-size:12px;line-height:16px;color:#000;font-weight:bold;"><span class="h" style="font-size:15.6px;letter-spacing:-0.2px;-webkit-text-stroke:0.5px currentColor">도움말</span>(H)</div><div style="position:absolute;left:552px;top:681px;width:178px;height:1px;background:#d7d7d7"></div><div style="position:absolute;left:552px;top:709.5px;width:178px;height:1px;background:#d7d7d7"></div><svg style="position:absolute;left:521px;top:567px" width="14" height="20" viewBox="0 0 14 20"><path d="M0.5,0.5 L0.5,16 L4,12.5 L6.5,18.5 L9,17.5 L6.5,11.5 L11.5,11.5 Z" fill="#fff" stroke="#000" stroke-width="1"/></svg><svg style="position:absolute;left:14px;top:813px" width="16" height="16" viewBox="0 0 16 16"><path d="M0,2.3 L6.6,1.3 L6.6,7.6 L0,7.6Z M7.6,1.1 L16,0 L16,7.6 L7.6,7.6Z M0,8.6 L6.6,8.6 L6.6,14.8 L0,13.9Z M7.6,8.6 L16,8.6 L16,16 L7.6,14.9Z" fill="#fff"/></svg><div style="position:absolute;left:46px;top:802px;width:336px;height:39px;background:#f0f0f0"></div><svg style="position:absolute;left:57px;top:812px" width="18" height="18" viewBox="0 0 18 18"><circle cx="11" cy="7" r="5.5" fill="none" stroke="#222" stroke-width="1.5"/><path d="M7,11 L1.5,16.5" stroke="#222" stroke-width="1.8"/></svg><div class="t" style="left:86px;top:812px;font-size:14px;line-height:20px;color:#333;font-weight:400;"><span class="h" style="font-size:18.2px;letter-spacing:1px">검색하려면</span> <span class="h" style="font-size:18.2px;letter-spacing:1px">여기에</span> <span class="h" style="font-size:18.2px;letter-spacing:1px">입력하세요</span>.</div><svg style="position:absolute;left:300px;top:800px" width="90" height="44" viewBox="0 0 90 44">
<path d="M19,41.5 Q24,38 30,37.5 Q36,36.5 40,34.5 Q46,34 52,37 Q60,38.5 68,38 Q74,39 78,41.5Z" fill="#8a5838"/>
<path d="M44.5,37 Q43.5,28 44,18" stroke="#3f9a45" stroke-width="2" fill="none"/>
<ellipse cx="43.5" cy="12" rx="3.2" ry="7" fill="#4ea455"/>
<ellipse cx="36" cy="17" rx="7.5" ry="3.2" fill="#51a858" transform="rotate(35 36 17)"/>
<ellipse cx="52" cy="17" rx="7.5" ry="3" fill="#48a050" transform="rotate(-32 52 17)"/>
<ellipse cx="38" cy="26" rx="6.5" ry="3.2" fill="#3f9647" transform="rotate(22 38 26)"/>
<ellipse cx="48" cy="28" rx="5.5" ry="2.8" fill="#45a04c" transform="rotate(-45 48 28)"/>
</svg><svg style="position:absolute;left:396px;top:813px" width="18" height="16" viewBox="0 0 18 16"><rect x="3.5" y="2.5" width="9" height="11" fill="none" stroke="#ddd" stroke-width="1.2"/><path d="M0.5,0.5 h3 M0.5,15.5 h3 M12.5,0.5 h3 M12.5,15.5 h3" stroke="#ddd" stroke-width="1.2"/><circle cx="16.5" cy="5" r="1.3" fill="#ddd"/><path d="M16.5,8 v7" stroke="#ddd" stroke-width="1.2"/></svg><svg style="position:absolute;left:443px;top:809px" width="25" height="25" viewBox="0 0 25 25">
<defs><linearGradient id="eg1" x1="0" y1="0" x2="1" y2="1"><stop offset="0" stop-color="#36c4ee"/><stop offset="1" stop-color="#1a9a5a"/></linearGradient>
<linearGradient id="eg2" x1="0" y1="0" x2="0" y2="1"><stop offset="0" stop-color="#0c6cc8"/><stop offset="1" stop-color="#0a4aa0"/></linearGradient></defs>
<circle cx="12.5" cy="12.5" r="12" fill="url(#eg2)"/>
<path d="M1,11 Q3,1 13,0.5 Q23,1 24.5,12 Q24,17 19,17 Q14,17 14,13 Q14,9 9,9 Q4,9 1,11Z" fill="url(#eg1)"/>
<path d="M8,14 Q8,20 15,22 Q20,23 23,19 Q18,21 14,19 Q10,17 11,13Z" fill="#3aa8f0"/>
</svg><svg style="position:absolute;left:492px;top:812px" width="23" height="19" viewBox="0 0 23 19"><path d="M0.5,2 Q0.5,0.5 2,0.5 L8,0.5 L10,2.5 L21,2.5 Q22.5,2.5 22.5,4 L22.5,17 Q22.5,18.5 21,18.5 L2,18.5 Q0.5,18.5 0.5,17Z" fill="#f2c04a"/><rect x="0.5" y="5" width="22" height="13.5" fill="#ffd36a"/><rect x="7" y="11" width="9" height="7.5" fill="#2a8ad8"/><rect x="9" y="13" width="5" height="5.5" fill="#ffd36a"/></svg><svg style="position:absolute;left:539px;top:810px" width="23" height="23" viewBox="0 0 23 23"><path d="M7,5 Q7,0.5 11.5,0.5 Q16,0.5 16,5" fill="none" stroke="#2a8ad8" stroke-width="1.5"/><rect x="0.5" y="5" width="22" height="17.5" rx="2" fill="#f4f4f4"/><rect x="6" y="9" width="5" height="5" fill="#f25022"/><rect x="12" y="9" width="5" height="5" fill="#7fba00"/><rect x="6" y="15" width="5" height="5" fill="#00a4ef"/><rect x="12" y="15" width="5" height="5" fill="#ffb900"/></svg><svg style="position:absolute;left:587px;top:811px" width="24" height="22" viewBox="0 0 24 22"><path d="M0.5,8 L12,0.5 L23.5,8 L23.5,21.5 L0.5,21.5Z" fill="#0a64b4"/><path d="M0.5,8 L12,15 L23.5,8 L23.5,21.5 L0.5,21.5Z" fill="#2a96e8"/><path d="M3,7 L12,12 L21,7 L21,5 L3,5Z" fill="#fff"/><path d="M0.5,21.5 L12,13 L23.5,21.5Z" fill="#48b0f4"/></svg><svg style="position:absolute;left:636px;top:810px" width="22" height="24" viewBox="0 0 22 24"><circle cx="9" cy="9" r="8.5" fill="#2a7ad8"/><path d="M3,4 Q7,2 9,5 Q8,9 4,10 Q2,8 3,4Z M10,2 Q15,3 16,8 Q13,9 12,6Z M9,12 Q13,11 14,15 Q11,17 9,16Z" fill="#5ac85a"/><path d="M12,14 L16,14 L16,17 L12,17Z" fill="#bbb" stroke="#777" stroke-width="0.6"/><path d="M16,16 Q20,17 19,20 Q18,22 14,22" fill="none" stroke="#aaa" stroke-width="1.5"/></svg><div style="position:absolute;left:627px;top:838px;width:40px;height:2px;background:#76b9ed"></div><div style="position:absolute;left:672px;top:802px;width:47px;height:39px;background:#253640"></div><svg style="position:absolute;left:683px;top:811px" width="24" height="22" viewBox="0 0 24 22"><path d="M2,7 L6,1 L22,1 L23,7Z" fill="#bdbdbd"/><rect x="2" y="7" width="21" height="6" fill="#6a6a6a"/><rect x="16" y="8.5" width="5" height="2" fill="#2ec84a"/><rect x="3" y="13" width="19" height="8" fill="#e4e4e4"/><rect x="6" y="15.5" width="3" height="3" fill="#444"/><rect x="15" y="15.5" width="3" height="3" fill="#444"/></svg><div style="position:absolute;left:672px;top:838px;width:47px;height:2px;background:#76b9ed"></div><svg style="position:absolute;left:1294px;top:813px" width="24" height="16" viewBox="0 0 24 16"><rect x="0.7" y="0.7" width="22.6" height="14.6" rx="1.5" fill="none" stroke="#ddd" stroke-width="1.3"/><path d="M19,0.7 v14.6" stroke="#ddd" stroke-width="1"/><rect x="4" y="5" width="7" height="6" fill="none" stroke="#ddd" stroke-width="1.2"/><path d="M13,5.5 h4 M13,8 h4 M13,10.5 h4" stroke="#ddd" stroke-width="1"/></svg><svg style="position:absolute;left:1343px;top:818px" width="12" height="8" viewBox="0 0 12 8"><path d="M1,7 L6,1.5 L11,7" fill="none" stroke="#eee" stroke-width="1.3"/></svg><svg style="position:absolute;left:1365px;top:815px" width="16" height="15" viewBox="0 0 16 15"><rect x="3" y="1" width="12" height="9" fill="none" stroke="#eee" stroke-width="1.2"/><rect x="0.5" y="0.5" width="3" height="4" fill="#06151c" stroke="#eee" stroke-width="1"/><path d="M9,10 v3 M5,13.5 h8" stroke="#eee" stroke-width="1.2"/><path d="M2,4.5 v10" stroke="#eee" stroke-width="1"/></svg><svg style="position:absolute;left:1388px;top:815px" width="17" height="15" viewBox="0 0 17 15"><path d="M1,5 L4,5 L8,1.5 L8,13.5 L4,10 L1,10Z" fill="none" stroke="#eee" stroke-width="1.1"/><path d="M10,5 Q11.5,7.5 10,10 M12,3.5 Q14.5,7.5 12,11.5 M14,2 Q17.5,7.5 14,13" fill="none" stroke="#eee" stroke-width="1.1"/></svg><div class="t" style="left:1411px;top:812px;font-size:19px;line-height:22px;color:#eee;font-weight:400;">A</div><div class="t" style="left:1439px;top:805px;font-size:12px;line-height:16px;color:#fff;font-weight:400;"><span class="h" style="font-size:15.6px;letter-spacing:-0.2px">오전</span> 10:07</div><div class="t" style="left:1436px;top:823px;font-size:12px;line-height:16px;color:#fff;font-weight:400;">2024-06-05</div><svg style="position:absolute;left:1519px;top:813px" width="17" height="17" viewBox="0 0 17 17"><path d="M0.7,0.7 L16.3,0.7 L16.3,12 L10,12 L8,15.5 L6,12 L0.7,12Z" fill="none" stroke="#eee" stroke-width="1.2"/></svg><div style="position:absolute;left:1554px;top:802px;width:1px;height:39px;background:#3a4a52"></div><div class="t" style="right:3.5px;top:753.5px;font-size:11px;line-height:16px;color:#fff;letter-spacing:0.45px">Windows 10 Enterprise Evaluation</div><div class="t" style="right:3.5px;top:769.5px;font-size:11px;line-height:16px;color:#fff;letter-spacing:0.45px">Windows <span class="h" style="font-size:14.3px;letter-spacing:1px">라이선스가</span> 90<span class="h" style="font-size:14.3px;letter-spacing:1px">일</span> <span class="h" style="font-size:14.3px;letter-spacing:1px">동안</span> <span class="h" style="font-size:14.3px;letter-spacing:1px">유효합니다</span>.</div><div class="t" style="right:3.5px;top:785.5px;font-size:11px;line-height:16px;color:#fff;letter-spacing:0.45px">Build 19041.vb_release.191206-1406</div><script>(function(){var s=document.createElement("span");s.style.cssText="position:absolute;left:0;top:0;font:100px \"Liberation Sans\",sans-serif;visibility:hidden;white-space:nowrap";s.textContent="\uAC00\uB098\uB2E4";document.body.appendChild(s);var w=s.getBoundingClientRect().width;document.body.removeChild(s);if(w>262)document.body.className+=" kr";})();</script></body></html>
